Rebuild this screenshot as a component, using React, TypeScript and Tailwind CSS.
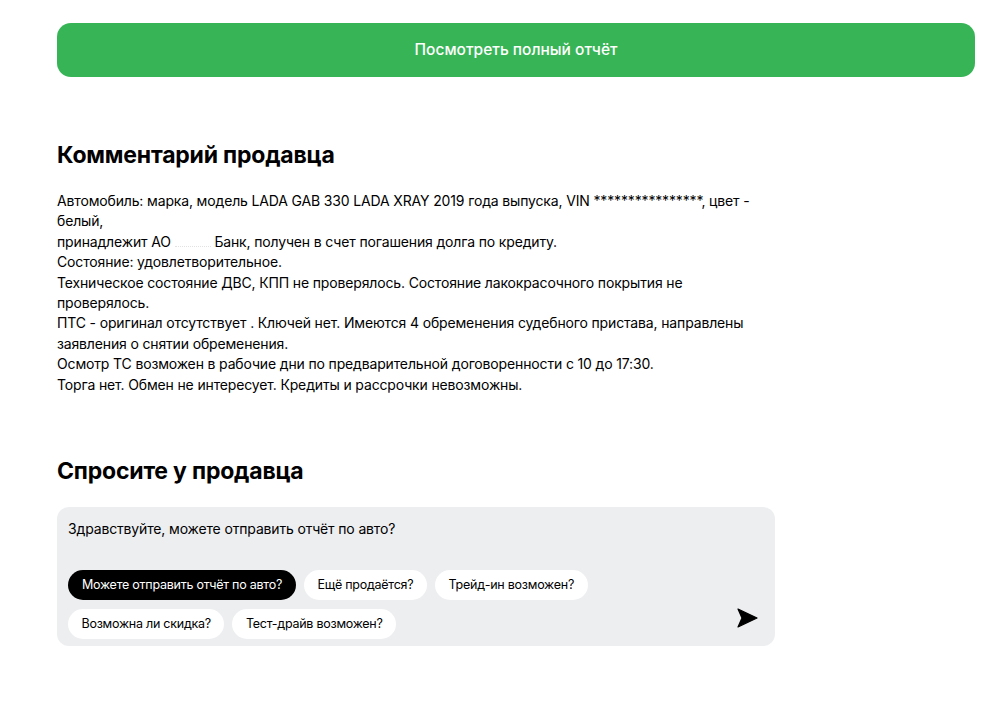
import React from "react";

const comment = [
  "Автомобиль: марка, модель LADA GAB 330 LADA XRAY 2019 года выпуска, VIN ****************, цвет - белый,",
  "принадлежит АО ____ Банк, получен в счет погашения долга по кредиту.",
  "Состояние: удовлетворительное.",
  "Техническое состояние ДВС, КПП не проверялось. Состояние лакокрасочного покрытия не проверялось.",
  "ПТС - оригинал отсутствует . Ключей нет. Имеются 4 обременения судебного пристава, направлены заявления о снятии обременения.",
  "Осмотр ТС возможен в рабочие дни по предварительной договоренности с 10 до 17:30.",
  "Торга нет. Обмен не интересует. Кредиты и рассрочки невозможны.",
];

const chips = [
  "Можете отправить отчёт по авто?",
  "Ещё продаётся?",
  "Трейд-ин возможен?",
  "Возможна ли скидка?",
  "Тест-драйв возможен?",
];

function SendIcon() {
  return (
    <svg width="21" height="20" viewBox="0 0 21 20" fill="none">
      <path d="M1 1 L20 10 L1 19 L5 10 Z" fill="#000" stroke="#000" strokeWidth="1.2" strokeLinejoin="round" />
    </svg>
  );
}

export default function App() {
  const [active, setActive] = React.useState(0);

  return (
    <div
      className="min-h-screen bg-white text-black"
      style={{ fontFamily: "Inter, 'Noto Sans', Arial, sans-serif" }}
    >
      <div className="pl-[57px] pr-[11px] pt-[23px]">
        <button className="flex h-[54px] w-full items-center justify-center rounded-[14px] bg-[#37b556] text-[15.5px] font-medium text-white">
          Посмотреть полный отчёт
        </button>

        <h2 className="mt-[64px] text-[23px] font-bold leading-[28px] tracking-[-0.2px]">
          Комментарий продавца
        </h2>

        <div className="mt-[22px] w-[712px] text-[14px] leading-[20.4px] tracking-[-0.15px]">
          {comment.map((line, i) =>
            i === 1 ? (
              <p key={i}>
                принадлежит АО{" "}
                <span className="inline-block h-[14px] w-[36px] border-b border-dotted border-[#e2e2e2] align-baseline" />{" "}
                Банк, получен в счет погашения долга по кредиту.
              </p>
            ) : (
              <p key={i}>{line}</p>
            )
          )}
        </div>

        <h2 className="mt-[62px] text-[23px] font-bold leading-[28px] tracking-[-0.2px]">
          Спросите у продавца
        </h2>

        <div className="mt-[22px] w-[718px] rounded-[12px] bg-[#edeef0] px-[11px] pb-[7px] pt-[12px]">
          <div className="text-[14px] leading-[20px] tracking-[-0.15px]">
            Здравствуйте, можете отправить отчёт по авто?
          </div>
          <div className="mt-[31px] flex items-end justify-between">
            <div className="flex w-[560px] flex-wrap gap-x-[8px] gap-y-[9px]">
              {chips.map((c, i) => (
                <button
                  key={c}
                  onClick={() => setActive(i)}
                  className={
                    i === active
                      ? "h-[30px] rounded-full bg-black px-[14px] text-[12.5px] tracking-[-0.25px] text-white"
                      : "h-[30px] rounded-full bg-white px-[13.5px] text-[12.5px] tracking-[-0.25px] text-black"
                  }
                >
                  {c}
                </button>
              ))}
            </div>
            <div className="mb-[11px] mr-[6px]">
              <SendIcon />
            </div>
          </div>
        </div>
      </div>
    </div>
  );
}
